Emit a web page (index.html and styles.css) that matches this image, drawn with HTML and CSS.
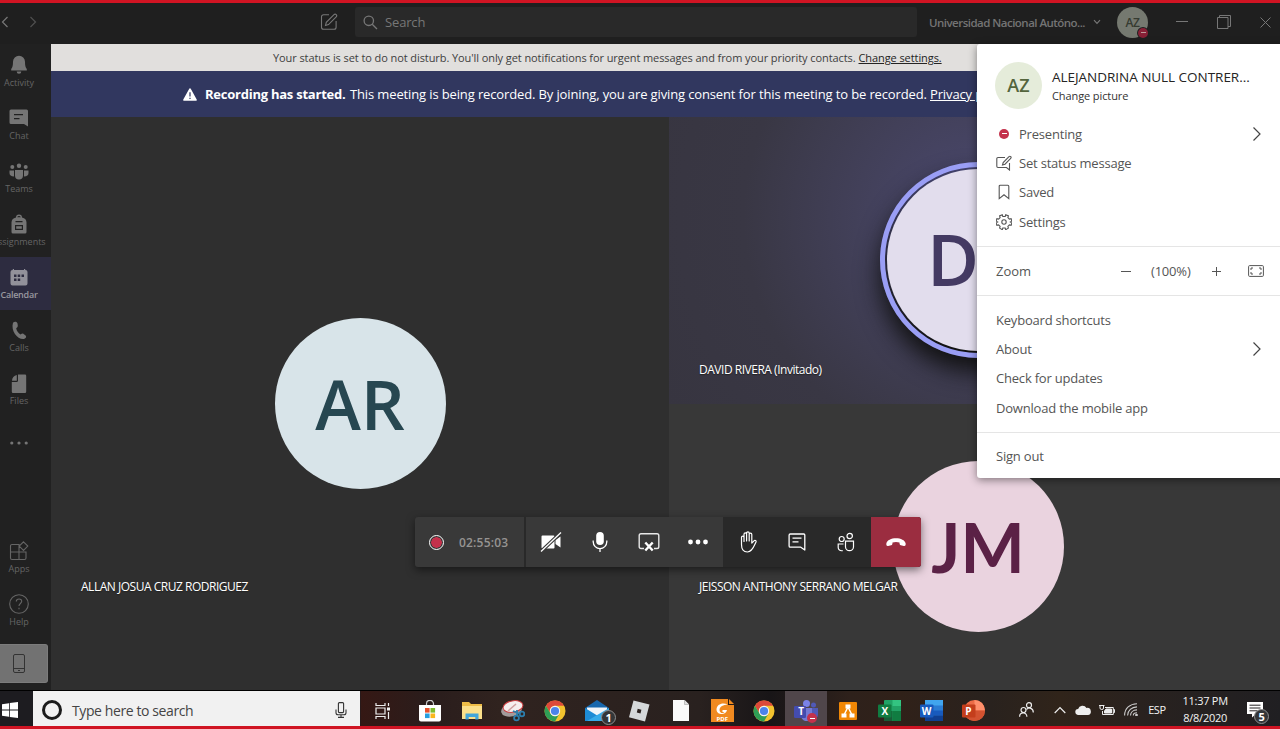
FILE: index.html
```html
<!DOCTYPE html>
<html lang="en">
<head>
<meta charset="utf-8">
<title>Meeting</title>
<link rel="stylesheet" href="styles.css">
</head>
<body>
<svg class="defs" width="0" height="0" aria-hidden="true">
  <symbol id="chrome" viewBox="0 0 22 22">
    <circle cx="11" cy="11" r="10.5" fill="#f2c22e"/>
    <path d="M1.9 5.8A10.5 10.5 0 0 1 20.1 5.8H11A5.2 5.2 0 0 0 6.5 13.6Z" fill="#dc493a"/>
    <path d="M1.9 5.8A10.5 10.5 0 0 0 11 21.5L15.5 13.6A5.2 5.2 0 0 1 6.5 13.6Z" fill="#2f9e56"/>
    <circle cx="11" cy="11" r="5.2" fill="#f4f4f4"/><circle cx="11" cy="11" r="4.1" fill="#4b83ea"/>
  </symbol>
  <symbol id="chevron" viewBox="0 0 10 16"><path d="M1.5 1.5 8 8 1.5 14.5" fill="none" stroke="currentColor" stroke-width="1.2"/></symbol>
</svg>
<div class="screen">
  <header class="titlebar">
    <div class="nav">
      <svg class="nav-back" width="8" height="12" viewBox="0 0 8 12"><path d="M6.5 1 1.5 6l5 5" fill="none" stroke="currentColor" stroke-width="1.2"/></svg>
      <svg class="nav-next" width="8" height="12" viewBox="0 0 8 12"><path d="M1.5 1l5 5-5 5" fill="none" stroke="currentColor" stroke-width="1.2"/></svg>
    </div>
    <svg class="compose" width="18" height="18" viewBox="0 0 18 18" fill="none" stroke="currentColor" stroke-width="1.1"><path d="M9 1.7H3.5a2 2 0 0 0-2 2v10.600a2 2 0 0 0 2 2h10.600a2 2 0 0 0 2-2V8"/><path d="M5.500 12.500 6.300 9.400 14 1.700a1.500 1.500 0 0 1 2.200 2.200L8.500 11.600Z"/></svg>
    <div class="search">
      <svg width="15" height="15" viewBox="0 0 15 15" fill="none" stroke="currentColor" stroke-width="1.3"><circle cx="5.800" cy="5.800" r="4.700"/><path d="M9.200 9.200 14 14"/></svg>
      <span>Search</span>
    </div>
    <div class="org">Universidad Nacional Autóno...</div>
    <svg class="org-arrow" width="8" height="6" viewBox="0 0 8 6"><path d="M1 1.200 4 4.300l3-3.100" fill="none" stroke="currentColor" stroke-width="1.200"/></svg>
    <div class="me">AZ<i class="dnd"></i></div>
    <svg class="win-min" width="12" height="12" viewBox="0 0 12 12"><path d="M0 5.500h12" stroke="currentColor"/></svg>
    <svg class="win-max" width="14" height="14" viewBox="0 0 14 14" fill="none" stroke="currentColor"><path d="M.500 2.500h10.500v11H.500Z"/><path d="M2.500 2.500v-2h11v11H11"/></svg>
    <svg class="win-close" width="11" height="11" viewBox="0 0 11 11"><path d="M.500.500l10 10m0-10-10 10" stroke="currentColor"/></svg>
  </header>

  <div class="app">
    <nav class="rail">
      <a class="rail-item"><svg viewBox="0 0 20 20"><path d="M10 .8a6 6 0 0 0-6 6c0 4-.5 5.700-1.800 7.200v1.500h15.600V14C16.500 12.500 16 10.800 16 6.800a6 6 0 0 0-6-6ZM7.700 16.500a2.300 2.300 0 0 0 4.600 0Z"/></svg><span>Activity</span></a>
      <a class="rail-item"><svg viewBox="0 0 20 20"><path fill-rule="evenodd" d="M2 1.500h15.500a1.500 1.500 0 0 1 1.500 1.500v15.500L15 16H2a1.500 1.500 0 0 1-1.500-1.500V3A1.500 1.500 0 0 1 2 1.500ZM5 6v1.300h9V6Zm0 4v1.300h5.500V10Z"/></svg><span>Chat</span></a>
      <a class="rail-item"><svg class="low" viewBox="0 0 20 20"><circle cx="3.300" cy="5" r="2"/><circle cx="10" cy="3.800" r="2.200"/><circle cx="16.700" cy="5" r="2"/><path d="M.500 8.500h4.500v6C2 14.500 .500 13 .500 11ZM6 8h8v5.500a4 4 0 0 1-8 0ZM15 8.500h4.500v2.500c0 2-1.500 3.500-4.500 3.500Z"/></svg><span>Teams</span></a>
      <a class="rail-item"><svg viewBox="0 0 20 20"><path fill-rule="evenodd" d="M7 3.500a3 3 0 0 1 6 0c3 .7 4.500 2.500 4.500 5V18a1.500 1.500 0 0 1-1.500 1.500H4A1.500 1.500 0 0 1 2.500 18V8.500c0-2.500 1.500-4.300 4.500-5Zm1.200-.3h3.600a1.900 1.900 0 0 0-3.600 0ZM6.500 7v1.200h7V7ZM6 11v5h8v-5Zm1.200 1.300h5.600v2.500H7.200Z"/></svg><span>Assignments</span></a>
      <a class="rail-item active"><svg class="low" viewBox="0 0 20 20"><path fill-rule="evenodd" d="M5 1v1h10V1h1.200v1h.3a2 2 0 0 1 2 2V15.500a2 2 0 0 1-2 2H3.500a2 2 0 0 1-2-2V4a2 2 0 0 1 2-2h.3V1ZM5 6.500V9h2.500V6.500Zm3.700 0V9h2.500V6.500Zm3.800 0V9H15V6.500ZM5 10.500V13h2.500v-2.500Zm3.700 0V13h2.500v-2.500Z"/></svg><span>Calendar</span></a>
      <a class="rail-item"><svg class="low" viewBox="0 0 20 20"><path d="M4 1.700C5.500.3 8 .5 8.500 2.500l.3 2.200c.1 1.300-.8 1.800-1.600 2.500.5 2.800 2 4.700 4.300 6.200 1.200-.6 2-1.200 3.100-.5l2 1.600c1.200 1.200.3 2.800-1.600 3.500C9 19 1.500 10 4 1.700Z"/></svg><span>Calls</span></a>
      <a class="rail-item"><svg class="low" viewBox="0 0 20 20"><path d="M9 .5h7a1.200 1.200 0 0 1 1.200 1.200v16.100A1.200 1.200 0 0 1 16 19H4a1.200 1.200 0 0 1-1.200-1.200V8H7.500A1.500 1.500 0 0 0 9 6.500ZM7.800 1v5.800H3C3 4 5 1.500 7.800 1Z"/></svg><span>Files</span></a>
      <a class="rail-item more"><svg viewBox="0 0 20 20"><circle cx="2.800" cy="10" r="1.600"/><circle cx="10" cy="10" r="1.600"/><circle cx="17.200" cy="10" r="1.600"/></svg></a>
      <a class="rail-item line first-low"><svg viewBox="0 0 20 20"><path d="M10 18.500H3a1.500 1.500 0 0 1-1.500-1.500V5A1.500 1.500 0 0 1 3 3.500h7v15h5.500A1.500 1.500 0 0 0 17 17v-6H1.500M14.500.800l4.300 4.300-4.300 4.300L10.200 5.100Z"/></svg><span>Apps</span></a>
      <a class="rail-item line"><svg viewBox="0 0 20 20"><circle cx="10" cy="10" r="9.300"/><path d="M7.300 7.500c0-3.500 5.500-3.300 5.400-.2 0 2.200-2.700 2.200-2.700 4.700m0 1.700v1.600"/></svg><span>Help</span></a>
      <a class="mobile"><svg width="12" height="19" viewBox="0 0 12 19" fill="none" stroke="currentColor"><rect x=".500" y=".500" width="11" height="18" rx="1.500"/><path d="M.500 14.500h11M5 16.500h2"/></svg></a>
    </nav>

    <main class="content">
      <div class="status"><span class="status-text">Your status is set to do not disturb. You'll only get notifications for urgent messages and from your priority contacts.</span><a>Change settings.</a></div>
      <div class="banner">
        <svg width="14" height="13" viewBox="0 0 14 13"><path d="M7 .3c.4 0 .7.200.9.600l5.800 10.500c.3.700-.1 1.300-.8 1.300H1.100c-.7 0-1.100-.6-.8-1.300L6.100.9c.2-.4.500-.6.900-.6Z" fill="#fff"/><path d="M7 4.200v4.300M7 9.700v1.400" stroke="#31375f" stroke-width="1.200"/></svg>
        <b>Recording has started.</b><span class="banner-text">This meeting is being recorded. By joining, you are giving consent for this meeting to be recorded.</span><a>Privacy p</a>
      </div>
      <section class="stage">
        <div class="tile tile-ar"><div class="avatar ar">AR</div><span class="name">ALLAN JOSUA CRUZ RODRIGUEZ</span></div>
        <div class="tile tile-dr"><div class="ring"><div class="avatar dr">D</div></div><span class="name">DAVID RIVERA (Invitado)</span></div>
        <div class="tile tile-jm"><div class="avatar jm">JM</div><span class="name">JEISSON ANTHONY SERRANO MELGAR</span></div>
        <div class="callbar">
          <div class="timer"><i class="rec"></i><span>02:55:03</span></div>
          <div class="controls">
            <svg width="22" height="22" viewBox="0 0 22 22"><path d="M2.500 4.500h11a1 1 0 0 1 1 1v11a1 1 0 0 1-1 1h-11a1 1 0 0 1-1-1v-11a1 1 0 0 1 1-1ZM15.500 9l5-3.500v11l-5-3.500Z" fill="#fff"/><path d="m1 20.500 20-19" stroke="#393939" stroke-width="3.600"/><path d="m1 20.500 20-19" stroke="#fff" stroke-width="1.300"/></svg>
            <svg width="18" height="22" viewBox="0 0 18 22"><rect x="5.200" y="1" width="7.600" height="13" rx="3.800" fill="#fff"/><path d="M2.200 9.500v1.300a6.800 6.800 0 0 0 13.600 0V9.500M9 17.500V21" fill="none" stroke="#fff" stroke-width="1.300"/></svg>
            <svg width="22" height="20" viewBox="0 0 22 20" fill="none" stroke="#e8e8e8" stroke-width="1.400"><path d="M6 16.500H3A1.800 1.800 0 0 1 1.200 14.700V3.500A1.800 1.800 0 0 1 3 1.700h16a1.800 1.800 0 0 1 1.800 1.800v11.200a1.800 1.800 0 0 1-1.800 1.800h-3"/><path d="m7.300 10.500 7.400 8m0-8-7.400 8" stroke="#fff" stroke-width="2.400"/></svg>
            <svg width="22" height="6" viewBox="0 0 22 6" fill="#fff"><circle cx="3.500" cy="3" r="2.400"/><circle cx="11" cy="3" r="2.400"/><circle cx="18.500" cy="3" r="2.400"/></svg>
          </div>
          <div class="controls dark">
            <svg class="hand" width="18" height="22" viewBox="0 0 18 22" fill="none" stroke="#fff" stroke-width="1.200" stroke-linejoin="round" stroke-linecap="round"><path d="M2.500 13.500V6.300a1.200 1.200 0 0 1 2.500 0V3.200a1.200 1.200 0 0 1 2.600 0V2.100a1.200 1.200 0 0 1 2.600 0v1.400a1.200 1.200 0 0 1 2.600 0v8.600l2.200-2.300c.8-.8 2.500-.2 2 1.200C15 15 13.500 21 8.500 21c-4.300 0-6-3.200-6-7.500M5 6v4.500M7.600 3v7M10.200 3.500v6.500"/></svg>
            <svg width="18" height="18" viewBox="0 0 18 18" fill="none" stroke="#fff" stroke-width="1.300" stroke-linejoin="round"><path d="M2.300 1h13.500a1 1 0 0 1 1 1v15l-4-2.800H2.300a1.200 1.200 0 0 1-1.200-1.200V2.200A1.200 1.200 0 0 1 2.300 1ZM4.500 5.200h9M4.500 8.800h6"/></svg>
            <svg width="18" height="20" viewBox="0 0 18 20" fill="none" stroke="#fff" stroke-width="1.200"><circle cx="4.700" cy="7" r="2.500"/><circle cx="12.700" cy="4" r="2.700"/><path d="M8.500 9.200h8v5.500a4 4 0 0 1-8 0ZM6.500 12H1.200v3.500c0 2.200 1.800 3.700 4.500 3.100"/></svg>
          </div>
          <div class="hangup"><svg width="22" height="10" viewBox="0 0 22 10"><path d="M11 1.300c4.800 0 8.900 2 9.600 5 .4 1.800-.3 3-1.700 2.700l-3-.7c-1.300-.4-1.400-1.300-1.400-2.800-2-.7-5-.7-7 0 0 1.500-.1 2.400-1.400 2.800l-3 .7C1.700 9.300 1 8.100 1.400 6.300c.7-3 4.800-5 9.600-5Z" fill="#fff"/></svg></div>
        </div>
      </section>
    </main>

    <aside class="menu">
      <div class="profile">
        <div class="pic">AZ</div>
        <div class="who"><div class="fullname">ALEJANDRINA NULL CONTRER...</div><div class="change">Change picture</div></div>
      </div>
      <div class="group g1">
        <div class="row"><i class="presence"></i><span>Presenting</span><svg class="go" width="10" height="16"><use href="#chevron"/></svg></div>
        <div class="row"><svg class="ico" viewBox="0 0 16 16"><path d="M9 2.500H2A1.200 1.200 0 0 0 .8 3.700v7.600A1.200 1.200 0 0 0 2 12.500h8.500l3 2.500V8M6.500 10l.7-2.500L13 1.700a1.200 1.200 0 0 1 1.700 1.700L9 9.200Z"/></svg><span>Set status message</span></div>
        <div class="row"><svg class="ico" viewBox="0 0 16 16"><path d="M4.200 1.200h7.600a1 1 0 0 1 1 1v12.500L8 10.800l-4.800 3.900V2.200a1 1 0 0 1 1-1Z"/></svg><span>Saved</span></div>
        <div class="row"><svg class="ico" viewBox="0 0 16 16"><path d="m6.300.8.500 1.700h2.400L9.700.8l2.700 1.100-.5 1.700 1.500 1.500 1.700-.5.700 2.500-1.500.9 1.500.9-.7 2.500-1.700-.5-1.500 1.500.5 1.700-2.700 1.600-.5-1.700H6.800l-.5 1.700-2.700-1.600.5-1.700-1.500-1.500-1.700.5L.2 8.900 1.700 8 .2 7.100l.7-2.500 1.700.5 1.500-1.500-.5-1.700Z"/><circle cx="8" cy="8" r="2.200"/></svg><span>Settings</span></div>
      </div>
      <div class="group zoom"><span class="zl">Zoom</span><svg width="10" height="10" viewBox="0 0 10 10"><path d="M0 5.500h10" stroke="currentColor"/></svg><span class="pct">(100%)</span><svg width="10" height="10" viewBox="0 0 10 10"><path d="M0 5.500h9M4.500 1v9" stroke="currentColor"/></svg><svg class="full" width="16" height="12" viewBox="0 0 16 12" fill="none" stroke="currentColor"><rect x=".600" y=".600" width="14.800" height="10.800" rx="1"/><path d="M3 5V3h2M11 3h2v2M13 7v2h-2M5 9H3V7"/></svg></div>
      <div class="group g2">
        <div class="row">Keyboard shortcuts</div>
        <div class="row">About<svg class="go" width="10" height="16"><use href="#chevron"/></svg></div>
        <div class="row">Check for updates</div>
        <div class="row">Download the mobile app</div>
      </div>
      <div class="group g3"><div class="row">Sign out</div></div>
    </aside>
  </div>

  <footer class="taskbar">
    <div class="start"><svg width="16" height="16" viewBox="0 0 16 16" fill="#fff"><path d="M0 2.200 7 1.200V7.600H0ZM7.800 1.100 16 0V7.600H7.800ZM0 8.400H7v6.400l-7-1ZM7.800 8.400H16V16l-8.200-1.100Z"/></svg></div>
    <div class="cortana"><i class="o"></i><span>Type here to search</span><svg width="12" height="16" viewBox="0 0 12 16" fill="none" stroke="#333" stroke-width="1.100"><rect x="3.400" y=".600" width="5.200" height="10" rx="1"/><path d="M1 7.500v3.300q0 2 2 2h6q2 0 2-2V7.500M6 12.800v2.600M3 15.400h6"/></svg></div>
    <div class="task view"><svg width="16" height="16" viewBox="0 0 16 16" fill="none" stroke="#eee" stroke-width="1.200"><path d="M1 0v2.500h9V0M1 16v-2.500h9V16M1 5h9v6H1ZM13.500 0v3M13.500 9v7"/><path d="M12 6h3" stroke-width="3"/></svg></div>
    <div class="task"><svg width="22" height="22" viewBox="0 0 22 22"><path d="M7.500 7V3.800a3.500 3.500 0 0 1 7 0V7" fill="none" stroke="#ccc" stroke-width="1.200"/><path d="M0 5h22v14.500a2 2 0 0 1-2 2H2a2 2 0 0 1-2-2Z" fill="#fff"/><path d="M6 8h4.600v4.600H6Z" fill="#e8502c"/><path d="M11.500 8h4.600v4.600h-4.600Z" fill="#7dbb2c"/><path d="M6 13.500h4.600v4.600H6Z" fill="#269fe0"/><path d="M11.500 13.500h4.600v4.600h-4.600Z" fill="#f9b71c"/></svg></div>
    <div class="task"><svg width="22" height="20" viewBox="0 0 22 20"><path d="M1 1h7l2 2h11v14H1Z" fill="#eebd48"/><path d="M1 5h20v13H1Z" fill="#fbe08b"/><path d="M4.500 18.500v-6h13v6h-3.200V16H7.700v2.500Z" fill="#43a6da"/></svg></div>
    <div class="task"><svg width="24" height="22" viewBox="0 0 24 22"><ellipse cx="10.500" cy="10" rx="10.500" ry="6.500" transform="rotate(-12 10.500 10)" fill="#a39b9b"/><ellipse cx="12" cy="6.500" rx="10" ry="5.700" transform="rotate(-10 12 6.500)" fill="#f5eeee" stroke="#c93c3f"/><path d="M7 11l8-7" stroke="#cfa0a0" stroke-width="1.500"/><g fill="none" stroke="#2c7ead" stroke-width="1.800"><circle cx="15.500" cy="18" r="2.400"/><circle cx="21" cy="14" r="2.300"/><path d="m12 11 7 3M16 10v5.500"/></g></svg></div>
    <div class="task"><svg width="22" height="22"><use href="#chrome"/></svg></div>
    <div class="task mail"><svg width="24" height="22" viewBox="0 0 24 22"><path d="M0 8 12 0l12 8v13H0Z" fill="#1767ad"/><path d="M2 7.500h20v5L12 16 2 12Z" fill="#f1f5f9"/><path d="m0 8 13 8-9 5H0Z" fill="#1d8bd5"/><path d="M24 8v13H2Z" fill="#35aae9"/></svg><b class="badge">1</b></div>
    <div class="task"><svg width="22" height="22" viewBox="0 0 22 22"><path fill-rule="evenodd" d="M5.500.5 21.500 4.500 17 21.500 1 17.300ZM9.700 8.800 8.800 12.500 12.500 13.400 13.400 9.700Z" fill="#d5d8da"/></svg></div>
    <div class="task"><svg width="16" height="21" viewBox="0 0 16 21"><path d="M0 0h11.500L16 4.500V21H0Z" fill="#fafafa"/><path d="M11.500 0v4.500H16" fill="#ddd" stroke="#aaa" stroke-width=".7"/></svg></div>
    <div class="task foxit"><svg width="23" height="23" viewBox="0 0 23 23"><path d="M0 0h17v6h6v17H0Z" fill="#f18a20"/><path d="M18 0v5h5Z" fill="#f18a20"/><path d="M16.500 5.500c-5-2.500-11 0-11 5 0 5.500 9.500 6.500 10.500.5h-4.500v2h2c-1.500 2.200-5 .9-5-2 0-3.500 4-5.200 8-5.500Z" fill="#fff"/></svg><span class="pdf">PDF</span></div>
    <div class="task"><svg width="22" height="22"><use href="#chrome"/></svg></div>
    <div class="task teams"><svg width="24" height="22" viewBox="0 0 24 22"><circle cx="19.500" cy="5" r="2.500" fill="#5059b7"/><circle cx="12.500" cy="3.500" r="3.500" fill="#7b83e8"/><path d="M16 8h8v6c0 4-3 6-6 5Z" fill="#5059b7"/><path d="M7 8h11v7c0 8-11 8-11 0Z" fill="#7479d5"/><rect y="6" width="12" height="12" rx="1.200" fill="#444cae"/></svg><span class="letter">T</span><i class="dnd"></i></div>
    <div class="task"><svg width="18" height="18" viewBox="0 0 18 18"><rect width="18" height="18" rx="1" fill="#f08705"/><path d="m9 5-4 8M9 5l4 8" stroke="#fff" stroke-width="1.500"/><path d="M6.500 2.500h5v4h-5ZM2.500 11.500h5v4h-5ZM10.500 11.500h5v4h-5Z" fill="#fff"/></svg></div>
    <div class="task office"><svg width="23" height="21" viewBox="0 0 23 21"><rect x="6" width="17" height="21" rx="1" fill="#21a366"/><path d="M14.500 0H23v6h-8.500Z" fill="#33c481"/><path d="M6 11h8.500v10H6Z" fill="#185c37"/><path d="M14.500 11H23v10h-8.500Z" fill="#107c41"/><rect y="4.500" width="13.500" height="13" rx="1" fill="#107c41"/></svg><span class="letter">X</span></div>
    <div class="task office"><svg width="23" height="21" viewBox="0 0 23 21"><rect x="5" width="18" height="21" rx="1" fill="#2b7cd3"/><path d="M5 0h18v5.500H5Z" fill="#41a5ee"/><path d="M5 10.500h18v5H5Z" fill="#185abd"/><path d="M5 15.500h18V21H5Z" fill="#103f91"/><rect y="4.500" width="13.500" height="13" rx="1" fill="#185abd"/></svg><span class="letter">W</span></div>
    <div class="task office"><svg width="23" height="21" viewBox="0 0 23 21"><circle cx="12.500" cy="10.500" r="10.500" fill="#ed6c47"/><path d="M12.500 0A10.500 10.500 0 0 1 23 10.500H12.500Z" fill="#ff8f6b"/><path d="M2 10.500h21a10.500 10.500 0 0 1-21 0Z" fill="#d35230"/><rect y="4.500" width="13.500" height="13" rx="1" fill="#c43e1c"/></svg><span class="letter">P</span></div>
    <div class="tray">
      <svg class="people" width="15" height="16" viewBox="0 0 15 16" fill="none" stroke="#eee" stroke-width="1.200"><circle cx="4.500" cy="8" r="2.500"/><circle cx="10" cy="3.200" r="2.500"/><path d="M.600 14.800c0-5.200 7.300-5.200 7.300 0M7.500 7.500c2.500-3 6.800-1 6.800 3"/></svg>
      <svg class="up" width="12" height="8" viewBox="0 0 12 8"><path d="m.700 7 5.300-5.500L11.300 7" fill="none" stroke="#eee" stroke-width="1.200"/></svg>
      <svg class="cloud" width="16" height="10" viewBox="0 0 16 10"><path d="M3.500 10a3 3 0 0 1-.4-6A4.600 4.600 0 0 1 11.500 3 3.500 3.500 0 0 1 13 10Z" fill="#eee"/></svg>
      <svg class="battery" width="16" height="12" viewBox="0 0 16 12" fill="none" stroke="#eee"><path d="M6 3.500h8.300v7H3.500V7M14.300 5.500h1.200v3h-1.200M1 1v3q0 1.500 1.800 1.500T4.500 4V1M0 1.500h5.500"/><path d="M7 5h5.500v4H5.500V7Z" fill="#eee"/></svg>
      <svg class="wifi" width="14" height="13" viewBox="0 0 14 13" fill="none" stroke="#ccc" stroke-width="1.100"><path d="M.600 12.500C.600 5 6 1 13 .800M3.600 12.500c0-5 4-8.400 9.400-8.600M6.500 12.500C6.500 9.500 9 7 13 6.900M9.300 12.500c0-1.500 1.400-2.700 3.700-2.700"/><circle cx="12.500" cy="12" r=".800" fill="#eee"/></svg>
      <span class="lang">ESP</span>
      <div class="clock"><div>11:37 PM</div><div>8/8/2020</div></div>
      <div class="notes"><svg width="16" height="16" viewBox="0 0 16 16"><path d="M0 0h16v12H9l-4 3.500V12H0Z" fill="#fff"/><path d="M2.500 3.200h11M2.500 6h11M2.500 8.800h8" stroke="#252325"/></svg><b class="badge">5</b></div>
    </div>
  </footer>
</div>
</body>
</html>
```
FILE: styles.css
```css
* { box-sizing: border-box; }
body { margin: 0; font-family: "Open Sans", "Noto Sans", sans-serif; overflow: hidden; }
.defs { position: absolute; }
svg { display: block; flex: none; }
.screen { width: 1280px; height: 729px; overflow: hidden; display: flex; flex-direction: column; border-top: 3px solid #d01423; border-bottom: 3px solid #d01423; background: #1f1f1f; white-space: nowrap; }

/* Title bar */
.titlebar { height: 41px; flex: none; display: flex; align-items: center; background: #1f1f1f; color: #777; padding-bottom: 3px; }
.nav { display: flex; width: 320px; gap: 20px; padding-left: 1px; }
.nav-next { color: #505050; }
.search { margin-left: 17px; width: 562px; height: 30px; display: flex; align-items: center; gap: 7px; padding-left: 8px; background: #292929; border-radius: 3px; font-size: 13px; letter-spacing: -.15px; color: #777; }
.org { margin-left: 12px; width: 156px; font-size: 11.5px; font-weight: 600; letter-spacing: -.52px; color: #747474; }
.org-arrow { margin-left: 8px; }
.me { position: relative; margin-left: 16px; width: 31px; height: 31px; border-radius: 50%; background: #757970; color: #363b31; font-size: 12px; font-weight: 600; text-align: center; line-height: 31px; letter-spacing: -.3px; }
.dnd { position: absolute; width: 10px; height: 10px; border-radius: 50%; background: linear-gradient(#b99, #b99) center / 5px 1px no-repeat #872036; }
.me .dnd { right: 0; bottom: 0; box-shadow: 0 0 0 1px #1f1f1f; }
.win-min { margin-left: 28px; }
.win-max { margin-left: 29px; }
.win-close { margin-left: 29px; }

/* App area */
.app { position: relative; height: 646px; flex: none; display: flex; }
.rail { width: 51px; height: 646px; flex: none; overflow: hidden; padding-top: 1px; background: #212121; }
.rail-item { width: 64px; margin-left: -13px; height: 53px; display: flex; flex-direction: column; align-items: center; padding-top: 10px; gap: 1px; color: #656565; font-size: 9px; line-height: 14px; }
.rail-item svg { width: 20px; height: 20px; fill: #757575; }
.rail-item svg.low { overflow: visible; margin: 1px 0 -1px; }
.rail-item.active { background: #2d2c40; color: #99989f; font-weight: 600; letter-spacing: -.25px; }
.rail-item.active svg { fill: #92919a; }
.rail-item.more { padding-top: 17px; }
.rail-item.line svg { fill: none; stroke: #656565; stroke-width: 1.1; }
.rail-item.first-low { margin-top: 62px; }
.mobile { display: flex; width: 48px; height: 39px; margin-top: 7px; align-items: center; padding-left: 13px; background: #727272; border: 1px solid #7c7c7c; border-left: 0; border-radius: 0 3px 3px 0; color: #333; }

.content { width: 1229px; flex: none; overflow: hidden; }
.status { height: 27px; display: flex; align-items: center; padding-left: 222px; gap: 3px; background: #e1dfdd; color: #403e3d; font-size: 11px; letter-spacing: -.083px; }
.status a { text-decoration: underline; color: #252423; }
.banner { height: 46px; display: flex; align-items: center; padding-left: 132px; background: #31375f; color: #fff; font-size: 13px; letter-spacing: -.13px; }
.banner b { margin-left: 8px; width: 145px; letter-spacing: -.24px; }
.banner-text { width: 580px; }
.banner a { text-decoration: underline; }

.stage { position: relative; height: 573px; display: grid; grid-template-columns: 618px 618px; grid-template-rows: 287px 286px; }
.tile { position: relative; display: flex; align-items: center; justify-content: center; background: #383838; }
.tile-ar { grid-row: 1 / 3; background: #2f2f2f; }
.tile-dr { padding-bottom: 1px; background: radial-gradient(circle at 50% 35%, #4b4970 0, #424059 34%, #393744 65%, #373540 100%); }
.tile-jm { padding-bottom: 1px; }
.name { position: absolute; left: 30px; bottom: 94px; font-size: 12px; line-height: 18px; color: #fff; letter-spacing: -.48px; text-shadow: 0 1px 1px #222; }
.tile-dr .name { bottom: 25px; }
.avatar { width: 171px; height: 171px; border-radius: 50%; font-size: 69px; line-height: 171px; text-align: center; font-weight: 600; }
.ar { background: #d8e4e9; color: #274751; }
.dr { width: 182px; height: 182px; line-height: 180px; font-size: 71px; text-align: left; padding-left: 40px; background: #e2dded; color: #443a63; }
.jm { background: #ead3df; color: #5b2146; font-family: Lato, sans-serif; font-weight: 700; font-size: 68px; }
.ring { width: 196px; height: 196px; padding: 2px; border: 5px solid #9a9ef5; border-radius: 50%; background: linear-gradient(#41406a, #111); box-shadow: 0 14px 24px #111; }

.callbar { position: absolute; left: 364px; top: 400px; width: 506px; height: 50px; display: flex; border-radius: 3px; overflow: hidden; background: #292929; box-shadow: 0 3px 9px rgba(0, 0, 0, .5); }
.timer { width: 109px; display: flex; align-items: center; padding-left: 14px; gap: 15px; background: #393939; margin-right: 2px; color: #969492; font-size: 12px; font-weight: 600; letter-spacing: .2px; }
.rec { width: 15px; height: 15px; border-radius: 50%; border: 1px solid #fff; background: radial-gradient(circle, #c4314b 5px, #393939 5.500px); }
.controls { width: 197px; display: grid; grid-template-columns: repeat(4, 1fr); align-items: center; background: #393939; }
.controls svg { margin: 0 auto; }
.controls.dark { width: 148px; grid-template-columns: repeat(3, 1fr); background: #292929; }
.hangup { width: 50px; display: flex; align-items: center; justify-content: center; background: #9b2d40; }

/* Profile menu */
.menu { position: absolute; left: 977px; top: 0; width: 310px; height: 434px; background: #fff; border-radius: 3px; box-shadow: 0 2px 8px rgba(0, 0, 0, .45); color: #555; font-size: 13px; }
.profile { display: flex; gap: 10px; padding: 18px 0 0 18px; height: 75px; }
.pic { width: 47px; height: 47px; border-radius: 50%; background: #e5ecda; color: #54653d; font-size: 18px; font-weight: 600; text-align: center; line-height: 46px; }
.who { padding-top: 6px; }
.fullname { font-size: 13.500px; line-height: 19px; color: #252423; letter-spacing: -.03px; }
.change { font-size: 11px; line-height: 17px; color: #333; letter-spacing: -.1px; }
.group { padding-left: 19px; border-bottom: 1px solid #e5e5e5; }
.row { height: 29.300px; display: flex; align-items: center; letter-spacing: -.2px; }
.g1 { height: 128px; }
.g1 .row { gap: 8px; }
.ico { width: 16px; height: 16px; margin-right: -1px; fill: none; stroke: #555; stroke-width: 1.1; }
.presence { width: 10px; height: 10px; margin: 0 2px 0 3px; border-radius: 50%; background: linear-gradient(#fff, #fff) center / 5px 1px no-repeat #c4314b; }
.go { margin-left: auto; margin-right: 25px; color: #444; }
.zoom { height: 49px; display: flex; align-items: center; padding-bottom: 1px; }
.zl { width: 125px; }
.pct { width: 71px; padding-left: 20px; margin-right: 10px; letter-spacing: -.2px; }
.zoom .full { margin-left: 26px; }
.g2 { height: 137px; padding-top: 9px; }
.g3 { padding-top: 8px; border: 0; }

/* Taskbar */
.taskbar { height: 36px; flex: none; display: flex; align-items: stretch; border-top: 1px solid #000; background: linear-gradient(90deg, #1d1c20 0, #1d1c20 360px, #351814 361px, #2a1d1c 430px, #30231f 500px, #29211f 700px, #181517 770px, #2e211b 850px, #302119 900px, #29221e 990px, #30241a 1060px, #29221f 1140px, #201f22 1280px); }
.start { width: 33px; display: flex; align-items: center; padding: 3px 0 0 2px; }
.cortana { width: 327px; display: flex; align-items: center; background: #f1f1f1; color: #444; font-size: 14px; letter-spacing: -.4px; padding: 3px 0 0 9px; }
.cortana span { width: 263px; margin-left: 10px; }
.o { width: 20px; height: 20px; border: 3px solid #1b1b1b; border-radius: 50%; }
.task { position: relative; width: 41.800px; flex: none; display: flex; align-items: center; justify-content: center; padding-top: 4px; }
.view { width: 49px; padding-right: 3px; }
.teams { background: #50464a; }
.badge { position: absolute; width: 15px; height: 15px; border-radius: 50%; border: 1px solid #8d8d8d; background: #343638; color: #fff; font-size: 11px; line-height: 13px; text-align: center; }
.mail .badge { left: 25px; top: 19px; }
.pdf { position: absolute; left: 15px; top: 24px; font-size: 6px; line-height: 8px; font-weight: 700; color: #fff; }
.letter { position: absolute; left: 9.500px; top: 11px; width: 13px; text-align: center; color: #fff; font-size: 10px; line-height: 18px; font-weight: 700; }
.teams .dnd { left: 22px; top: 22px; background-color: #c4314b; background-image: linear-gradient(#fff, #fff); }
.tray { flex: none; display: flex; align-items: center; padding: 2px 0 0 25px; color: #f3f3f3; }
.up { margin-left: 20px; }
.cloud { margin-left: 9px; }
.battery { margin-left: 8px; }
.wifi { margin-left: 9px; }
.lang { width: 27px; margin-left: 10px; font-size: 11px; letter-spacing: -.4px; }
.clock { width: 60px; margin-top: -2px; font-size: 11px; line-height: 17px; letter-spacing: -.25px; text-align: center; }
.notes { position: relative; margin-left: 12px; }
.notes .badge { left: 7px; top: 7px; }
```
